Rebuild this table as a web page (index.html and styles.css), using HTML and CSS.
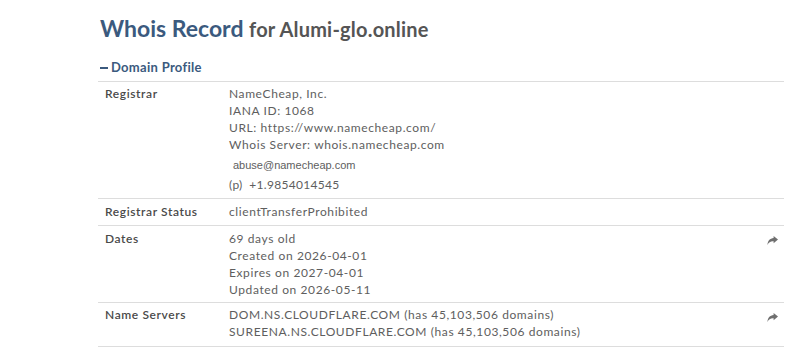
FILE: index.html
```html
<!DOCTYPE html>
<html lang="en">
<head>
    <meta charset="UTF-8">
    <meta name="viewport" content="width=device-width, initial-scale=1.0">
    <title>Whois Record for Alumi-glo.online</title>
    <link rel="stylesheet" href="styles.css">
</head>
<body>
    <div class="whois-container">
        <h1 class="whois-title">Whois Record <span class="whois-domain">for Alumi-glo.online</span></h1>

        <div class="section-toggle">
            <span class="toggle-icon"></span>Domain Profile
        </div>

        <div class="profile-table">
            <div class="profile-row">
                <div class="profile-label">Registrar</div>
                <div class="profile-value">
                    <div>NameCheap, Inc.</div>
                    <div>IANA ID: 1068</div>
                    <div>URL: https://www.namecheap.com/</div>
                    <div>Whois Server: whois.namecheap.com</div>
                    <div class="contact-email">abuse@namecheap.com</div>
                    <div class="contact-phone">(p)&nbsp; +1.9854014545</div>
                </div>
            </div>

            <div class="profile-row">
                <div class="profile-label">Registrar Status</div>
                <div class="profile-value">clientTransferProhibited</div>
            </div>

            <div class="profile-row">
                <div class="profile-label">Dates</div>
                <div class="profile-value">
                    <div>69 days old</div>
                    <div>Created on 2026-04-01</div>
                    <div>Expires on 2027-04-01</div>
                    <div>Updated on 2026-05-11</div>
                </div>
                <span class="row-action">
                    <svg width="11" height="9" viewBox="0 0 10 8"><path d="M6 0 L10 3.2 L6 6.4 V4.6 C3.4 4.4 1.6 5.4 0.4 8 C0.6 4.4 2.6 2.1 6 1.8 Z" fill="#6f6f6f"/></svg>
                </span>
            </div>

            <div class="profile-row">
                <div class="profile-label">Name Servers</div>
                <div class="profile-value">
                    <div>DOM.NS.CLOUDFLARE.COM (has 45,103,506 domains)</div>
                    <div>SUREENA.NS.CLOUDFLARE.COM (has 45,103,506 domains)</div>
                </div>
                <span class="row-action">
                    <svg width="11" height="9" viewBox="0 0 10 8"><path d="M6 0 L10 3.2 L6 6.4 V4.6 C3.4 4.4 1.6 5.4 0.4 8 C0.6 4.4 2.6 2.1 6 1.8 Z" fill="#6f6f6f"/></svg>
                </span>
            </div>
        </div>
    </div>
</body>
</html>
```

FILE: styles.css
```css
body {
    margin: 0;
    background: #fff;
    font-family: Lato, "Open Sans", sans-serif;
    color: #555;
}
.whois-container {
    width: 686px;
    margin-left: 98px;
    padding-top: 13px;
}
.whois-title {
    margin: 0 0 0 2px;
    font-size: 23px;
    font-weight: 700;
    line-height: 30px;
    color: #3b5a7e;
}
.whois-domain {
    font-size: 20px;
    letter-spacing: 0.2px;
    color: #555;
}
.section-toggle {
    margin-top: 15px;
    padding: 0 0 6px 2px;
    font-size: 13px;
    font-weight: 700;
    line-height: 16px;
    color: #3b5a7e;
    letter-spacing: 0.3px;
}
.toggle-icon {
    display: inline-block;
    width: 8px;
    height: 2px;
    background: #3b5a7e;
    vertical-align: middle;
    margin: -2px 3px 0 0;
}
.profile-row {
    position: relative;
    display: flex;
    border-top: 1px solid #ddd;
    padding: 3px 0 5px;
    font-size: 12px;
    line-height: 17px;
    letter-spacing: 0.6px;
}
.profile-row:nth-child(2) {
    padding-top: 4px;
}
.profile-row:nth-child(3) {
    padding-top: 4px;
    padding-bottom: 4px;
}
.profile-row:last-child {
    border-bottom: 1px solid #ddd;
    padding-bottom: 6px;
}
.profile-label {
    width: 124px;
    padding-left: 7px;
    flex-shrink: 0;
    color: #4a4a4a;
    font-weight: 600;
}
.profile-value {
    color: #5e5e5e;
}
.contact-email {
    margin-top: 4px;
    padding-left: 4px;
    font-family: "Liberation Sans", Arial, sans-serif;
    font-size: 11px;
    letter-spacing: 0;
}
.contact-phone {
    margin-top: 2px;
    letter-spacing: 0.3px;
}
.row-action {
    position: absolute;
    right: 6px;
    top: 6px;
}
```
